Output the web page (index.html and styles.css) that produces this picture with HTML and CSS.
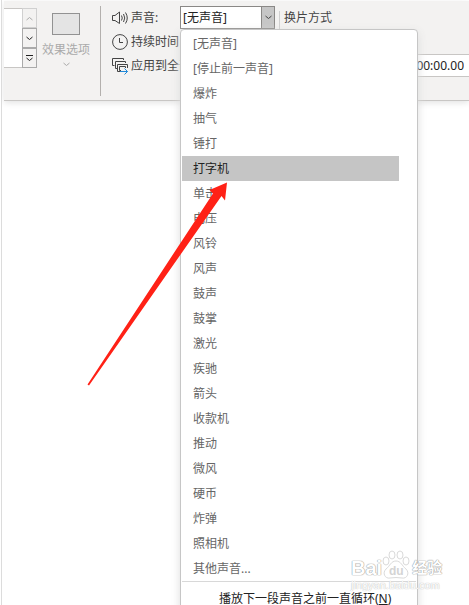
FILE: index.html
```html
<!DOCTYPE html>
<html lang="zh-CN">
<head>
<meta charset="utf-8">
<title>切换</title>
<link rel="stylesheet" href="styles.css">
</head>
<body>
<main class="window">
  <div class="ribbon">
    <div class="gallery">
      <div class="gallery-view"></div>
      <div class="gallery-nav">
        <button class="nav-button nav-disabled" aria-label="上一行" disabled><svg width="7" height="5" viewBox="0 0 7 5"><path d="M0.500 4L3.500 1.500L6.500 4"/></svg></button>
        <button class="nav-button" aria-label="下一行"><svg width="7" height="5" viewBox="0 0 7 5"><path d="M0.500 1L3.500 3.500L6.500 1"/></svg></button>
        <button class="nav-button" aria-label="更多"><svg width="7" height="8" viewBox="0 0 7 8"><path d="M0 1.500H7M0.500 4L3.500 6.500L6.500 4"/></svg></button>
      </div>
    </div>
    <button class="effect" disabled>
      <span class="effect-picture"></span>
      <span>效果选项</span>
      <svg width="7" height="5" viewBox="0 0 7 5"><path d="M0.500 1L3.500 3.500L6.500 1"/></svg>
    </button>
    <div class="divider"></div>
    <div class="labels">
      <label class="label" for="sound">
        <svg width="17" height="16" viewBox="0 0 17 16"><path d="M0.500 5.500H3L7.500 2V13.500L3 10.500H0.500ZM9.500 5.500Q11 8 9.500 10.500M11.500 4Q14 8 11.500 12M13.500 2.500Q17 8 13.500 13.500"/></svg>
        <span>声音:</span>
      </label>
      <div class="label">
        <svg width="17" height="16" viewBox="0 0 17 16"><circle cx="8" cy="8" r="7.400"/><path d="M7.500 4V8.500H11"/></svg>
        <span>持续时间</span>
      </div>
      <button class="label">
        <svg width="17" height="18" viewBox="0 0 17 18"><path d="M2.500 8.500H0.500V1.500H11.500V3M5 11.500H3.500V4.500H13.500V6M8 14.500H5.500V7.500H15.500V11"/><path d="M9 13.500H7.500V9.500H13.500V11"/><path class="arrow-accent" d="M8 14.500H15.500M12.500 11.500L15.500 14.500L12.500 17.500"/></svg>
        <span>应用到全部</span>
      </button>
    </div>
    <div class="combo">
      <select class="combo-select" id="sound"><option>[无声音]</option></select>
      <span class="combo-arrow"><svg width="7" height="5" viewBox="0 0 7 5"><path d="M0.500 1L3.500 3.500L6.500 1"/></svg></span>
      <div class="menu">
        <div class="menu-list">
          <button class="item">[无声音]</button>
          <button class="item">[停止前一声音]</button>
          <button class="item">爆炸</button>
          <button class="item">抽气</button>
          <button class="item">锤打</button>
          <button class="item item-active">打字机</button>
          <button class="item">单击</button>
          <button class="item">电压</button>
          <button class="item">风铃</button>
          <button class="item">风声</button>
          <button class="item">鼓声</button>
          <button class="item">鼓掌</button>
          <button class="item">激光</button>
          <button class="item">疾驰</button>
          <button class="item">箭头</button>
          <button class="item">收款机</button>
          <button class="item">推动</button>
          <button class="item">微风</button>
          <button class="item">硬币</button>
          <button class="item">炸弹</button>
          <button class="item">照相机</button>
          <button class="item">其他声音...</button>
        </div>
        <button class="item item-loop">播放下一段声音之前一直循环(<u>N</u>)</button>
      </div>
    </div>
    <div class="advance">
      <div class="advance-title">换片方式</div>
      <input class="time" aria-label="换片时间" value="00:00.00">
    </div>
  </div>
  <svg class="pointer" width="142" height="206" viewBox="0 0 142 206"><path d="M1.500 203.500L127 12.500L123.500 9L141 1.500L139 19.500L135.500 15L3 204.500Z"/></svg>
  <div class="watermark">
    <div class="brand">
      <span>Bai</span>
      <svg width="28" height="30" viewBox="0 0 28 30">
        <g class="paw"><ellipse cx="4" cy="11" rx="3" ry="4"/><ellipse cx="10" cy="5" rx="3" ry="4"/><ellipse cx="18" cy="5" rx="3" ry="4"/><ellipse cx="24" cy="11" rx="3" ry="4"/><path d="M14 11C9 11 8 16 4 19C0 23 3 29 8 28Q14 27 20 28C25 29 28 23 24 19C20 16 19 11 14 11Z"/></g>
        <text class="paw-text" x="7" y="25">du</text>
      </svg>
      <span class="brand-cn">经验</span>
    </div>
    <div class="address">jingyan.baidu.com</div>
  </div>
</main>
</body>
</html>
```

FILE: styles.css
```css
* { box-sizing: border-box; }

body {
  margin: 0;
  background: #fff;
  color: #444;
  font: 12px/16px "Noto Sans", "Noto Sans CJK SC", sans-serif;
}

button, select, input { font: inherit; color: inherit; }

button {
  margin: 0;
  padding: 0;
  border: 0;
  background: none;
}

svg { flex: none; fill: none; stroke: currentColor; }

.window {
  position: relative;
  height: 100vh;
  margin-left: 1px;
  padding: 1px 0 0 2px;
  border-left: 1px solid #dcdcdc;
  overflow: hidden;
}

.ribbon {
  display: flex;
  align-items: flex-start;
  height: 100px;
  padding-top: 5px;
  background: #f3f2f1;
  border-bottom: 1px solid #c8c6c4;
  box-shadow: 0 2px 6px #e4e4e4;
}

.gallery { display: flex; margin-top: 2px; }

.gallery-view {
  width: 18px;
  height: 60px;
  background: #fff;
  border: solid #c8c6c4;
  border-width: 1px 0;
}

.gallery-nav { display: flex; flex-direction: column; }

.nav-button {
  display: flex;
  align-items: center;
  justify-content: center;
  width: 15px;
  height: 20px;
  border: 1px solid #aaa;
  color: #222;
}

.nav-disabled { border-color: #d0d0d0; color: #aaa; }

.effect {
  display: flex;
  flex-direction: column;
  align-items: center;
  width: 58px;
  padding-top: 7px;
  color: #aaa;
}

.effect-picture {
  width: 28px;
  height: 22px;
  margin-bottom: 7px;
  border: 1px solid #929292;
  background: #e4e4e4;
}

.effect svg { margin-top: 4px; }

.divider {
  width: 1px;
  height: 90px;
  margin: 0 11px 0 5px;
  background: #b3b0ad;
}

.labels { display: flex; flex-direction: column; width: 68px; }

.label {
  display: flex;
  align-items: center;
  gap: 2px;
  height: 24px;
  white-space: nowrap;
}

.arrow-accent { stroke: #1e88d8; }

.combo {
  position: relative;
  display: flex;
  flex: none;
  width: 95px;
  height: 23px;
  border: 1px solid #8a8886;
  background: #fff;
}

.combo-select {
  flex: 1;
  min-width: 0;
  padding: 0 2px;
  border: 0;
  background: none;
  color: #222;
  appearance: none;
}

.combo-arrow {
  display: flex;
  align-items: center;
  justify-content: center;
  width: 13px;
  border-left: 1px solid #8a8886;
  background: #c6c6c6;
}

.menu {
  position: absolute;
  top: 22px;
  left: -1px;
  z-index: 1;
  width: 238px;
  padding: 1px;
  border: 1px solid #c6c6c6;
  border-radius: 4px;
  background: #fff;
  box-shadow: 0 3px 10px #ddd;
}

.menu-list {
  padding-right: 17px;
  margin-bottom: 4px;
  border-bottom: 1px solid #d8d8d8;
}

.item {
  display: block;
  width: 100%;
  height: 25px;
  padding-left: 11px;
  color: #666;
  text-align: left;
  white-space: nowrap;
}

.item-active { background: #c5c5c5; color: #222; }

.item-loop { padding-left: 37px; color: #222; }

.advance { flex: 1; min-width: 0; padding-left: 4px; }

.advance-title {
  margin-top: 5px;
  height: 18px;
  padding-left: 4px;
  border-left: 1px solid #d0d0d0;
  line-height: 13px;
}

.time {
  display: block;
  width: 100%;
  height: 23px;
  margin-top: 25px;
  padding: 0 5px 0 0;
  border: solid #c8c6c4;
  border-width: 1px 0;
  background: #fff;
  color: #222;
  text-align: right;
}

.pointer {
  position: absolute;
  top: 181px;
  left: 84px;
  z-index: 2;
  fill: #ff2116;
  stroke: none;
}

.watermark {
  position: absolute;
  top: 549px;
  left: 349px;
  z-index: 2;
  color: #fff;
  font-family: "Liberation Sans", "Noto Sans CJK SC", sans-serif;
  text-shadow: 0 0 1px #999, 0 0 1px #aaa, 0 0 1px #bbb;
}

.brand {
  display: flex;
  align-items: flex-end;
  height: 31px;
  font-size: 20px;
  font-weight: bold;
  line-height: 24px;
}

.brand-cn { margin-left: 2px; font-size: 15px; }

.paw { fill: #fff; stroke: #dadada; }

.paw-text { fill: #d4d4d4; stroke: none; font-size: 12px; font-weight: bold; text-shadow: none; }

.address { font-size: 11px; line-height: 11px; text-shadow: 0 0 1px #bbb, 0 0 1px #ccc; }
```
